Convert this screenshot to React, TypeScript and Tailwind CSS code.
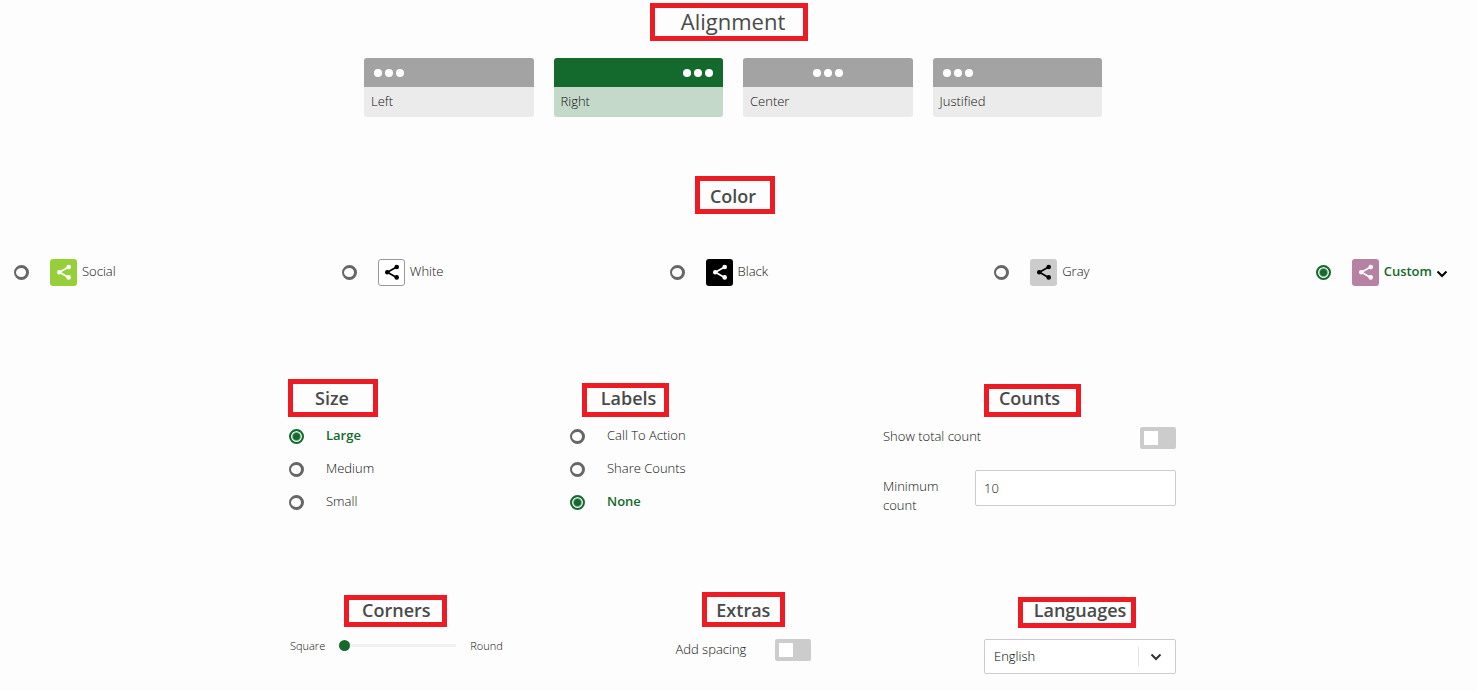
import { useState, type ReactNode } from "react";

const radioStyle =
  "size-[15px] shrink-0 appearance-none rounded-full border-3 border-l-2 border-[#666] bg-white checked:border-2 checked:border-[#136a2c] checked:bg-[#136a2c] checked:shadow-[inset_0_0_0_1px_#fff,inset_0_0_0_2px_#7fb08d]";

function Heading({ className, children }: { className: string; children: ReactNode }) {
  return (
    <h2
      className={`box-border flex items-center justify-center border-5 border-[#ed1c24] leading-6 whitespace-nowrap text-[#4a4a4a] ${className}`}
    >
      {children}
    </h2>
  );
}

function Dots() {
  return (
    <span className="flex gap-[3px]">
      <span className="size-2 rounded-full bg-white" />
      <span className="size-2 rounded-full bg-white" />
      <span className="size-2 rounded-full bg-white" />
    </span>
  );
}

function ShareIcon() {
  return (
    <svg viewBox="0 0 27 27" className="size-[27px]" fill="currentColor" stroke="currentColor">
      <path d="M18.6 8.1 9.4 13.2l9.2 5.2" fill="none" strokeWidth="1.7" />
      <circle cx="9.2" cy="13.2" r="2.2" stroke="none" />
      <circle cx="18.7" cy="8" r="2.3" stroke="none" />
      <circle cx="18.7" cy="18.4" r="2.3" stroke="none" />
    </svg>
  );
}

function Chevron({ className }: { className: string }) {
  return (
    <svg viewBox="0 0 12 8" className={className} fill="none" stroke="currentColor" strokeWidth="2">
      <path d="M1.5 1.5 6 6l4.5-4.5" />
    </svg>
  );
}

const alignments = [
  { name: "Left", justify: "justify-start" },
  { name: "Right", justify: "justify-end" },
  { name: "Center", justify: "justify-center" },
  { name: "Justified", justify: "justify-start" },
];

const colors = [
  { name: "Social", swatch: "bg-[#95d03a] text-white" },
  { name: "White", swatch: "bg-white text-black outline outline-1 -outline-offset-1 outline-[#999]" },
  { name: "Black", swatch: "bg-black text-white" },
  { name: "Gray", swatch: "bg-[#ccc] text-black" },
  { name: "Custom", swatch: "bg-[#b681a3] text-white" },
];

function RadioList({
  name,
  options,
  value,
  onChange,
}: {
  name: string;
  options: string[];
  value: string;
  onChange: (v: string) => void;
}) {
  return (
    <div className="mt-[3px] flex flex-col self-start">
      {options.map((o) => (
        <label
          key={o}
          className={`flex h-[33px] items-center gap-[22px] whitespace-nowrap ${
            o === value ? "font-semibold text-[#136a2c]" : ""
          }`}
        >
          <input
            type="radio"
            name={name}
            checked={o === value}
            onChange={() => onChange(o)}
            className={radioStyle}
          />
          <span className="pb-0.5">{o}</span>
        </label>
      ))}
    </div>
  );
}

function Toggle({ id }: { id: string }) {
  return (
    <input
      id={id}
      type="checkbox"
      role="switch"
      className="h-[22px] w-9 shrink-0 appearance-none rounded-xs bg-[#ccc] px-1 py-1 before:block before:size-[14px] before:bg-white checked:bg-[#136a2c] checked:before:ml-auto"
    />
  );
}

export default function App() {
  const [align, setAlign] = useState("Right");
  const [color, setColor] = useState("Custom");
  const [size, setSize] = useState("Large");
  const [labels, setLabels] = useState("None");
  const [corner, setCorner] = useState(0);

  return (
    <main className="min-h-screen bg-[#fdfdfd] pt-[3px] pr-[27px] pb-4 pl-3.5 font-['Open_Sans',sans-serif] text-[13px] leading-[19px] font-light text-[#111]">
      <section className="flex flex-col items-center">
        <Heading className="mr-1.5 h-[38px] w-[158px] pb-0.5 pl-2 text-[22px] font-normal">Alignment</Heading>
        <div className="mt-[17px] grid w-full max-w-[740px] grid-cols-4 gap-5 pl-0.5">
          {alignments.map((a) => {
            const on = a.name === align;
            return (
              <button
                key={a.name}
                type="button"
                aria-pressed={on}
                onClick={() => setAlign(a.name)}
                className="flex flex-col overflow-hidden rounded-[3px] text-left"
              >
                <span
                  className={`flex h-[29px] w-full items-center px-2.5 ${a.justify} ${
                    on ? "bg-[#136a2c]" : "bg-[#a3a3a3]"
                  }`}
                >
                  <Dots />
                </span>
                <span
                  className={`flex h-[30px] w-full items-center px-[7px] pb-0.5 ${on ? "bg-[#c5d9cb]" : "bg-[#ebebeb]"}`}
                >
                  {a.name}
                </span>
              </button>
            );
          })}
        </div>
      </section>

      <section className="mt-[59px] flex flex-col items-center">
        <Heading className="ml-1.5 h-[38px] w-20 pt-0.5 pr-1 text-lg font-semibold">Color</Heading>
        <div className="mt-[45px] flex w-full justify-between pr-0.5">
          {colors.map((c) => (
            <label
              key={c.name}
              className={`flex items-center ${c.name === color ? "font-semibold text-[#136a2c]" : ""}`}
            >
              <input
                type="radio"
                name="color"
                checked={c.name === color}
                onChange={() => setColor(c.name)}
                className={radioStyle}
              />
              <span className={`mr-[5px] ml-[21px] rounded-[3px] ${c.swatch}`}>
                <ShareIcon />
              </span>
              <span className="pb-0.5">{c.name}</span>
              {c.name === "Custom" && <Chevron className="mt-0.5 ml-1 h-2 w-3 text-black" />}
            </label>
          ))}
        </div>
      </section>

      <section className="mx-auto mt-[93px] flex w-full max-w-[888px] justify-between">
        <div className="flex w-[90px] flex-col items-center">
          <Heading className="h-[38px] w-[90px] pr-0.5 text-lg font-semibold">Size</Heading>
          <div className="self-start pl-px">
            <RadioList name="size" options={["Large", "Medium", "Small"]} value={size} onChange={setSize} />
          </div>
        </div>
        <div className="flex w-[121px] flex-col pt-1">
          <Heading className="ml-3 h-[34px] w-[87px] pb-1 pl-1.5 text-lg font-semibold">Labels</Heading>
          <RadioList
            name="labels"
            options={["Call To Action", "Share Counts", "None"]}
            value={labels}
            onChange={setLabels}
          />
        </div>
        <div className="flex w-[293px] flex-col pt-[5px]">
          <Heading className="ml-[101px] h-[33px] w-[97px] pr-1.5 pb-1.5 text-lg font-semibold">Counts</Heading>
          <div className="mt-2.5 flex items-center justify-between">
            <label htmlFor="total" className="pb-[3px]">
              Show total count
            </label>
            <Toggle id="total" />
          </div>
          <div className="mt-[21px] flex items-start">
            <label htmlFor="minimum" className="w-[92px] pt-[7px] pr-5">
              Minimum count
            </label>
            <input
              id="minimum"
              type="text"
              defaultValue="10"
              className="h-9 min-w-0 flex-1 rounded-xs border border-[#ccc] bg-white px-2"
            />
          </div>
        </div>
      </section>

      <section className="mx-auto mt-[73px] flex w-full max-w-[888px] justify-between">
        <div className="flex flex-col items-center pt-[3px]">
          <Heading className="h-8 w-[103px] pb-0.5 pl-0.5 text-lg font-semibold">Corners</Heading>
          <div className="mt-[9px] flex items-center gap-3.5 pl-0.5 text-[11px]">
            <label htmlFor="corners">Square</label>
            <input
              id="corners"
              type="range"
              min={0}
              max={100}
              value={corner}
              onChange={(e) => setCorner(Number(e.target.value))}
              className="h-[11px] w-[117px] appearance-none bg-transparent [&::-webkit-slider-runnable-track]:h-[3px] [&::-webkit-slider-runnable-track]:bg-[#f1f1f1] [&::-webkit-slider-thumb]:-mt-1 [&::-webkit-slider-thumb]:size-[11px] [&::-webkit-slider-thumb]:appearance-none [&::-webkit-slider-thumb]:rounded-full [&::-webkit-slider-thumb]:bg-[#136a2c]"
            />
            <span>Round</span>
          </div>
        </div>
        <div className="flex flex-col items-center">
          <Heading className="h-[35px] w-[83px] text-lg font-semibold">Extras</Heading>
          <div className="mt-3 flex items-center gap-[29px]">
            <label htmlFor="spacing" className="pb-0.5">
              Add spacing
            </label>
            <Toggle id="spacing" />
          </div>
        </div>
        <div className="flex w-48 flex-col pt-[5px]">
          <Heading className="ml-[34px] h-[31px] w-[118px] pb-1.5 pl-1.5 text-lg font-semibold">Languages</Heading>
          <div className="mt-[11px] grid items-center">
            <select
              aria-label="Languages"
              className="col-start-1 row-start-1 h-[35px] w-full appearance-none rounded-xs border border-[#ccc] bg-white px-[9px] text-black"
            >
              <option>English</option>
            </select>
            <span className="pointer-events-none col-start-1 row-start-1 mr-[14px] flex h-[19px] items-center justify-self-end border-l border-[#e3e3e3] pl-[11px] text-[#333]">
              <Chevron className="h-2 w-3" />
            </span>
          </div>
        </div>
      </section>
    </main>
  );
}
